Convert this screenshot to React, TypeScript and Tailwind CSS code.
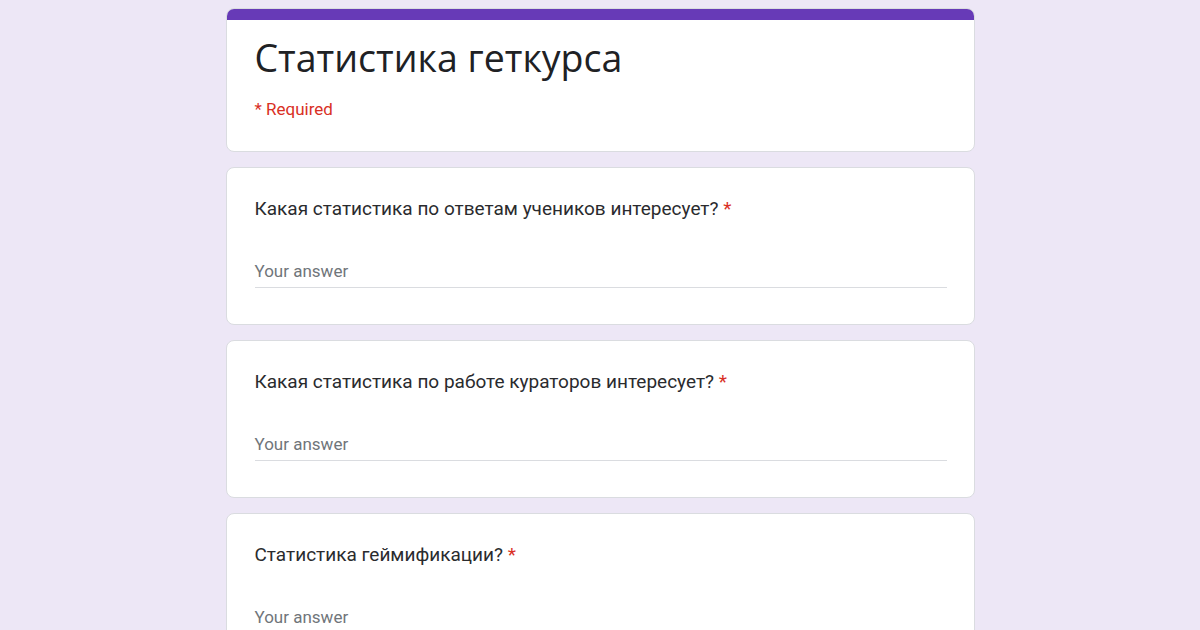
import React from "react";

const questions = [
  "Какая статистика по ответам учеников интересует?",
  "Какая статистика по работе кураторов интересует?",
  "Статистика геймификации?",
];

export default function App() {
  return (
    <div className="w-[1200px] h-[630px] overflow-hidden bg-[#ede7f6]" style={{ fontFamily: "Roboto, 'Liberation Sans', sans-serif" }}>
      <div className="w-[749px] mx-auto pt-[8px] flex flex-col gap-[15px]">
        <div className="bg-white rounded-[8px] border border-[#dadce0] overflow-hidden">
          <div className="h-[11px] bg-[#673ab7]" />
          <div className="px-[28px] pt-[14px] pb-[32px]">
            <div className="text-[37.5px] leading-[48px] text-[#202124]" style={{ fontFamily: "'Open Sans', sans-serif" }}>
              Статистика геткурса
            </div>
            <div className="mt-[17px] text-[17px] leading-[20px] text-[#d93025]">* Required</div>
          </div>
        </div>
        {questions.map((q) => (
          <div key={q} className="bg-white rounded-[8px] border border-[#dadce0] px-[28px] pt-[29px] pb-[36px]">
            <div className="text-[19px] leading-[24px] text-[#2a2b2e]">
              {q} <span className="text-[#d93025]">*</span>
            </div>
            <div className="mt-[40px] w-[692px] border-b border-[#dadce0] pb-[6px] text-[17px] leading-[20px] text-[#70757a]">
              Your answer
            </div>
          </div>
        ))}
      </div>
    </div>
  );
}
